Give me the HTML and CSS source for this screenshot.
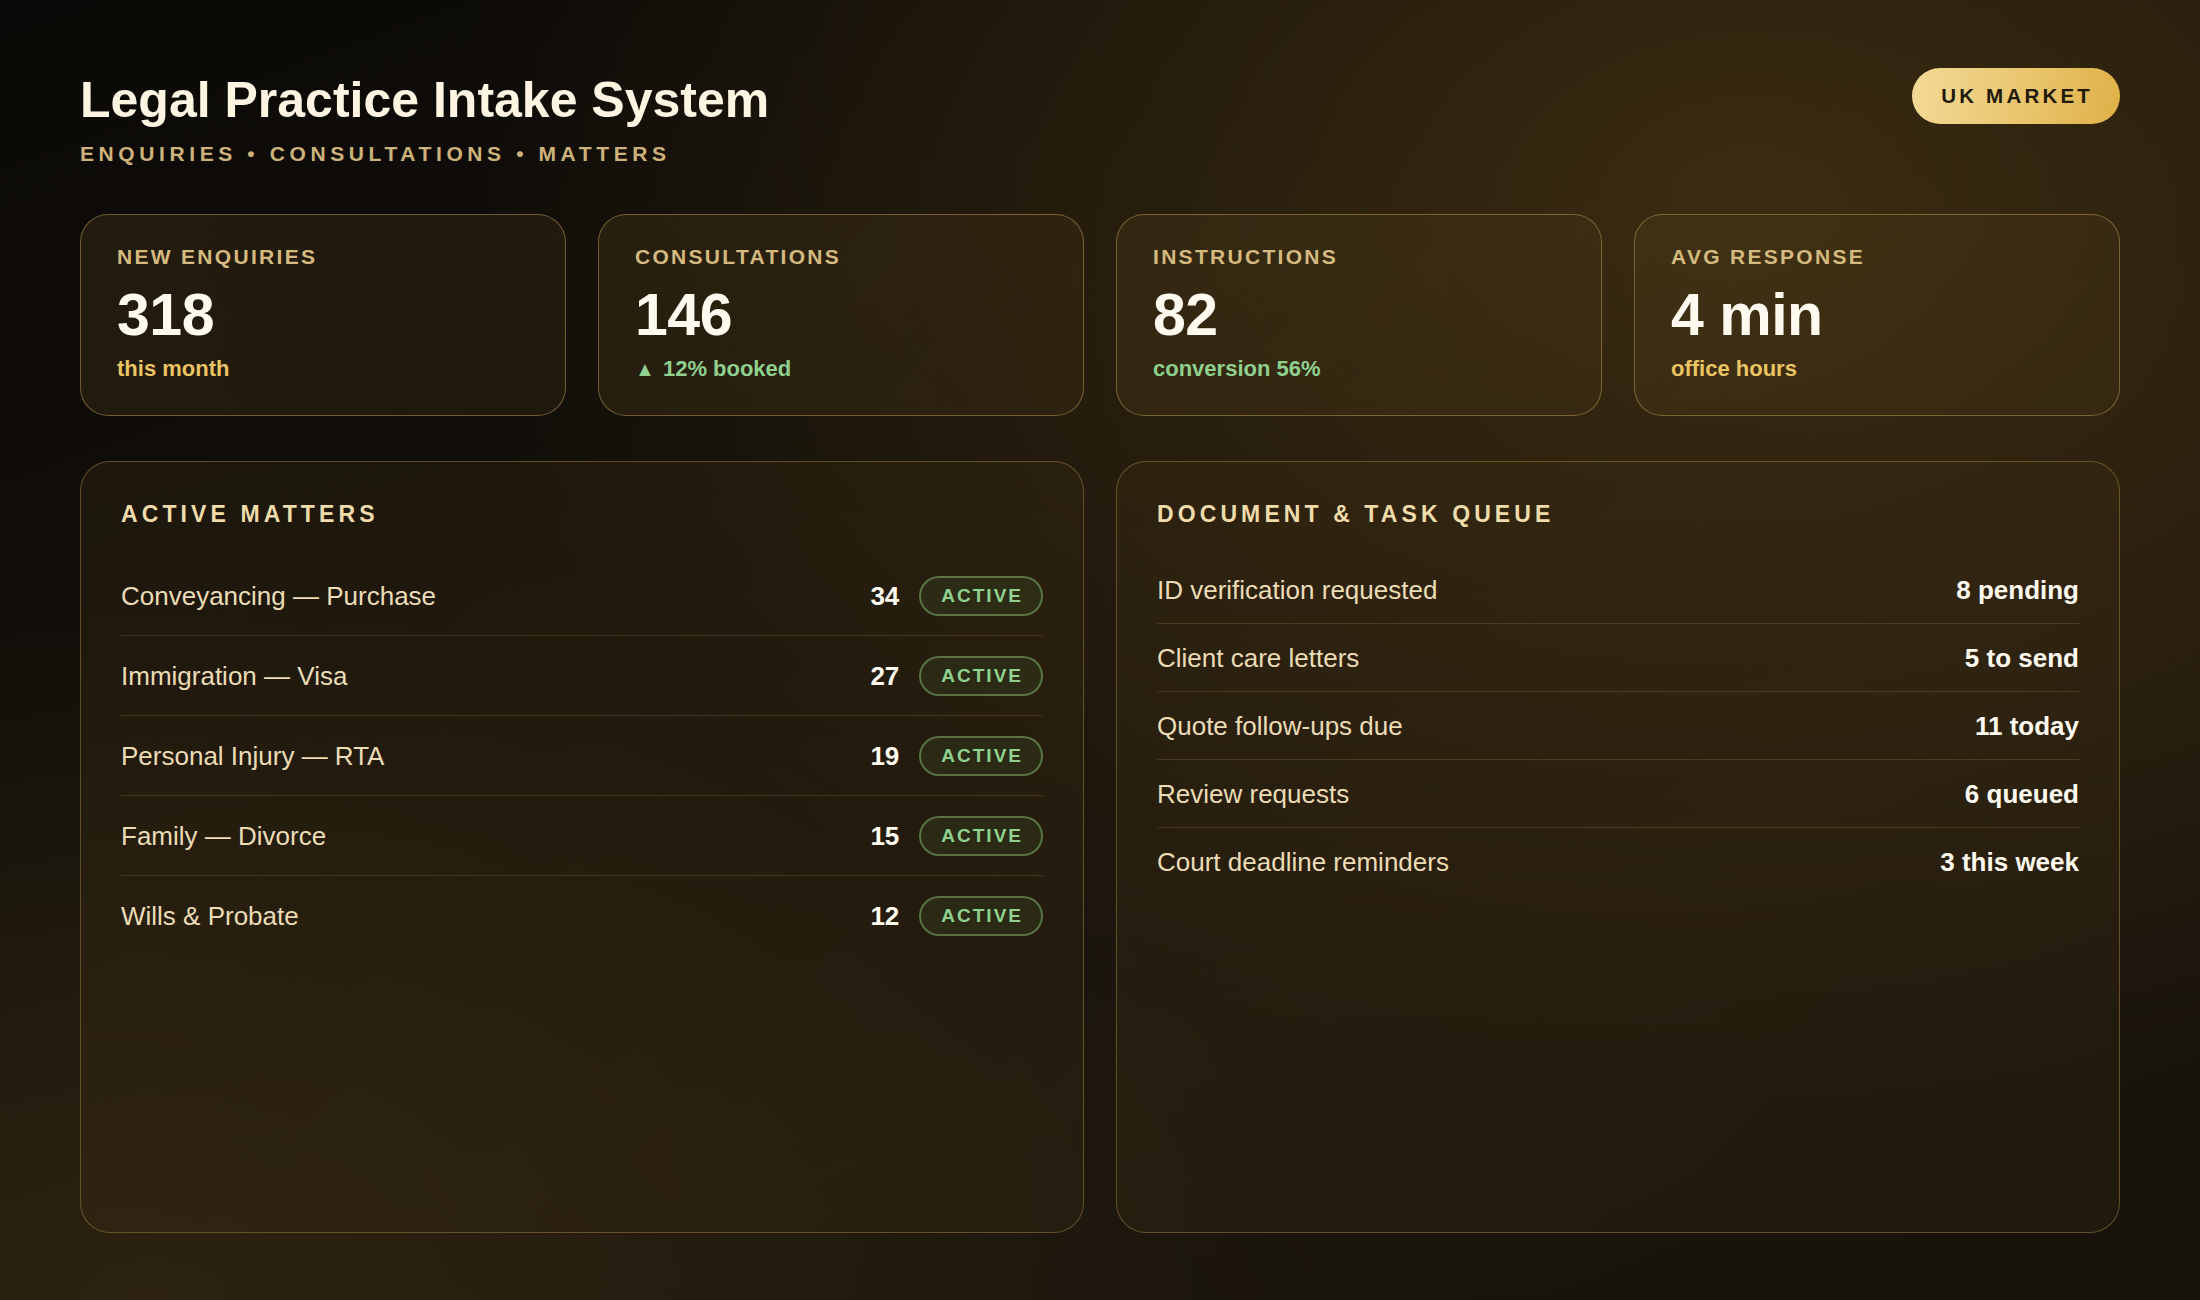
FILE: index.html
```html
<!DOCTYPE html>
<html lang="en">
<head>
<meta charset="utf-8">
<title>Legal Practice Intake System</title>
<link rel="stylesheet" href="styles.css">
</head>
<body>
<div class="page">
  <header class="header">
    <div class="titles">
      <h1 class="title">Legal Practice Intake System</h1>
      <div class="subtitle">ENQUIRIES • CONSULTATIONS • MATTERS</div>
    </div>
    <div class="market">UK MARKET</div>
  </header>

  <section class="kpis">
    <div class="kpi">
      <div class="kpi-label">NEW ENQUIRIES</div>
      <div class="kpi-value">318</div>
      <div class="kpi-sub gold">this month</div>
    </div>
    <div class="kpi">
      <div class="kpi-label">CONSULTATIONS</div>
      <div class="kpi-value">146</div>
      <div class="kpi-sub green"><span class="tri">▲</span> 12% booked</div>
    </div>
    <div class="kpi">
      <div class="kpi-label">INSTRUCTIONS</div>
      <div class="kpi-value">82</div>
      <div class="kpi-sub green">conversion 56%</div>
    </div>
    <div class="kpi">
      <div class="kpi-label">AVG RESPONSE</div>
      <div class="kpi-value">4 min</div>
      <div class="kpi-sub gold">office hours</div>
    </div>
  </section>

  <section class="panels">
    <div class="panel">
      <h2 class="panel-title">ACTIVE MATTERS</h2>
      <div class="matters">
        <div class="matter"><span class="m-name">Conveyancing — Purchase</span><span class="m-count">34</span><span class="status">ACTIVE</span></div>
        <div class="matter"><span class="m-name">Immigration — Visa</span><span class="m-count">27</span><span class="status">ACTIVE</span></div>
        <div class="matter"><span class="m-name">Personal Injury — RTA</span><span class="m-count">19</span><span class="status">ACTIVE</span></div>
        <div class="matter"><span class="m-name">Family — Divorce</span><span class="m-count">15</span><span class="status">ACTIVE</span></div>
        <div class="matter"><span class="m-name">Wills &amp; Probate</span><span class="m-count">12</span><span class="status">ACTIVE</span></div>
      </div>
    </div>
    <div class="panel">
      <h2 class="panel-title">DOCUMENT &amp; TASK QUEUE</h2>
      <div class="tasks">
        <div class="task"><span class="t-name">ID verification requested</span><span class="t-val">8 pending</span></div>
        <div class="task"><span class="t-name">Client care letters</span><span class="t-val">5 to send</span></div>
        <div class="task"><span class="t-name">Quote follow-ups due</span><span class="t-val">11 today</span></div>
        <div class="task"><span class="t-name">Review requests</span><span class="t-val">6 queued</span></div>
        <div class="task"><span class="t-name">Court deadline reminders</span><span class="t-val">3 this week</span></div>
      </div>
    </div>
  </section>
</div>
</body>
</html>
```

FILE: styles.css
```css
* { box-sizing: border-box; }

html, body {
  margin: 0;
  padding: 0;
  width: 2200px;
  height: 1300px;
  overflow: hidden;
}

body {
  font-family: "Liberation Sans", Arial, Helvetica, sans-serif;
  color: #f3e7c9;
  background-color: #15110a;
  background-image:
    radial-gradient(ellipse 1300px 900px at 1750px 200px, rgba(100, 72, 24, 0.5), rgba(100, 72, 24, 0) 100%),
    radial-gradient(ellipse 1200px 700px at 150px 1300px, rgba(60, 46, 20, 0.55), rgba(60, 46, 20, 0) 100%),
    linear-gradient(160deg, #0b0907 0%, #13100a 40%, #1b150d 70%, #17120b 100%);
}

.page {
  height: 1300px;
  padding: 68px 80px 67px;
  display: flex;
  flex-direction: column;
}

.header {
  display: flex;
  justify-content: space-between;
  align-items: flex-start;
}

.title {
  margin: 0;
  font-size: 50px;
  line-height: 64px;
  font-weight: 700;
  color: #fdf5e2;
}

.subtitle {
  margin-top: 10px;
  font-size: 21px;
  line-height: 24px;
  font-weight: 700;
  letter-spacing: 4.6px;
  color: #cdb27a;
}

.market {
  height: 56px;
  padding: 0 27px 0 29px;
  border-radius: 28px;
  display: flex;
  align-items: center;
  font-size: 20.5px;
  font-weight: 700;
  letter-spacing: 3.2px;
  color: #21190a;
  background: linear-gradient(100deg, #f3da98 0%, #e9c56c 55%, #e0b048 100%);
}

.kpis {
  margin-top: 48px;
  display: grid;
  grid-template-columns: repeat(4, 1fr);
  gap: 32px;
}

.kpi {
  border: 1.5px solid rgba(176, 145, 80, 0.55);
  border-radius: 28px;
  padding: 30px 36px 32px;
  background: linear-gradient(135deg, rgba(80, 62, 28, 0.32), rgba(70, 54, 24, 0.28));
}

.kpi-label {
  font-size: 21px;
  line-height: 24px;
  font-weight: 700;
  letter-spacing: 2.3px;
  color: #d4ba7f;
}

.kpi-value {
  margin-top: 14px;
  font-size: 59px;
  line-height: 64px;
  font-weight: 700;
  color: #fffaf0;
  letter-spacing: -0.5px;
}

.kpi-sub {
  margin-top: 8px;
  font-size: 22px;
  line-height: 28px;
  font-weight: 700;
}

.gold { color: #ebc463; }
.green { color: #8fd08f; }
.tri { font-size: 20px; margin-right: 2px; }

.panels {
  margin-top: 45px;
  flex: 1;
  display: grid;
  grid-template-columns: 1fr 1fr;
  gap: 32px;
}

.panel {
  border: 1.5px solid rgba(160, 130, 70, 0.5);
  border-radius: 30px;
  padding: 38px 40px;
  background: linear-gradient(135deg, rgba(60, 46, 20, 0.32), rgba(55, 42, 18, 0.3));
}

.panel-title {
  margin: 0 0 28px;
  font-size: 23px;
  line-height: 28px;
  font-weight: 700;
  letter-spacing: 4.1px;
  color: #f0dcaa;
}

.matter {
  display: flex;
  align-items: center;
  padding: 20px 0 19px;
  border-bottom: 1px solid rgba(190, 150, 80, 0.22);
}

.matter:last-child { border-bottom: none; }

.m-name {
  flex: 1;
  font-size: 26px;
  line-height: 30px;
  color: #ecdcb6;
}

.m-count {
  font-size: 26px;
  font-weight: 700;
  color: #fffaf0;
  margin-right: 20px;
}

.status {
  height: 40px;
  padding: 0 18px 0 20px;
  border-radius: 20px;
  border: 2px solid rgba(120, 165, 100, 0.6);
  background: rgba(70, 95, 50, 0.22);
  display: flex;
  align-items: center;
  font-size: 19px;
  font-weight: 700;
  letter-spacing: 2px;
  color: #90d190;
}

.task {
  display: flex;
  align-items: center;
  justify-content: space-between;
  padding: 19px 0 18px;
  border-bottom: 1px solid rgba(190, 150, 80, 0.22);
}

.task:last-child { border-bottom: none; }

.t-name {
  font-size: 26px;
  line-height: 30px;
  color: #ecdcb6;
}

.t-val {
  font-size: 26px;
  line-height: 30px;
  font-weight: 700;
  color: #fffaf0;
}
```
